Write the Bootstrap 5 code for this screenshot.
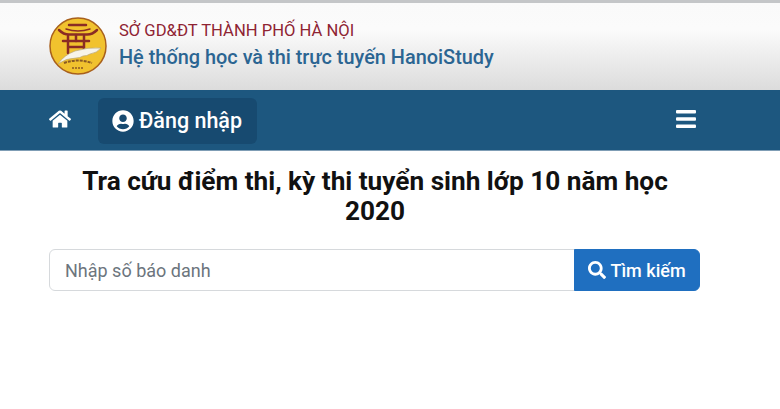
<!DOCTYPE html>
<html lang="vi">
<head>
    <meta charset="UTF-8">
    <meta name="viewport" content="width=device-width, initial-scale=1">
    <title>HanoiStudy</title>
    <link href="https://cdn.jsdelivr.net/npm/bootstrap@5.3.0/dist/css/bootstrap.min.css" rel="stylesheet">
    <style>
        body { font-family: Roboto, "Liberation Sans", sans-serif; background: #fff; }
        .top-line { height: 3px; background: #c4c6c8; }
        .site-head { height: 87px; padding-left: 49px; background: linear-gradient(#fafafa, #fbfbfb 30%, #dcdcdc); }
        .site-logo { width: 58px; height: 58px; margin-top: -1px; }
        .site-org { font-size: 16.6px; line-height: 20px; color: #8f2433; }
        .site-name { font-size: 19.9px; line-height: 30px; font-weight: 500; color: #2b6592; padding-top: 2px; }
        .main-bar { height: 61px; background: #1d577f; padding: 0 84px 0 49px; border-bottom: 1px solid #7f9db5; }
        .home-link { width: 22px; height: 20px; margin-right: 27px; margin-top: -3px; }
        .login-link { height: 46px; width: 159px; margin-top: 2px; padding-left: 14px; border-radius: 6px; background: #174a70; color: #fff; font-size: 21.5px; font-weight: 500; text-decoration: none; gap: 5px; }
        .burger { width: 20px; height: 18px; margin-top: -2px; }
        .page-title { width: 640px; margin: 15px 0 0 55px; font-size: 26.2px; line-height: 30px; font-weight: 700; color: #111; }
        .search-box { width: 651px; margin: 23px 0 0 49px; }
        .search-box .form-control { height: 42px; padding-left: 15px; font-size: 18px; border-color: #d6d9dc; }
        .search-box .form-control::placeholder { color: #6c757d; }
        .search-btn { width: 126px; height: 42px; background: #1f6fc0; border-color: #1f6fc0; font-size: 18px; font-weight: 500; padding: 0; }
    </style>
</head>
<body>
    <div class="top-line"></div>
    <header class="site-head d-flex align-items-center">
        <svg class="site-logo flex-shrink-0" viewBox="0 0 58 58">
            <circle cx="29" cy="29" r="28" fill="#f1c22e" stroke="#a8601c" stroke-width="1.5"/>
            <g fill="none" stroke="#8a2c24" stroke-linecap="round">
                <path d="M20 8h17" stroke-width="2.500"/>
                <path d="M17 12q6 2 12 2t12-2" stroke-width="1.500"/>
                <path d="M10 13q5 5 11 4.500h16q6 .5 11-4.500" stroke-width="2.500"/>
                <path d="M14 24h26" stroke-width="2.500"/>
                <path d="M19 19v17M35 19v14M19 30h16M27 18v6" stroke-width="2.500"/>
            </g>
            <path d="M9 47q6-9 17-13q13-4 26-3q-4 5-11 6q-3 2-7 2q-3 2-7 2q-10 0-18 6z" fill="#f7f4ea" stroke="#b9a679" stroke-width=".7"/>
            <path d="M15 46q14-5 28 0" fill="none" stroke="#8a5a24" stroke-width="2" stroke-dasharray="3 1"/>
            <path d="M23 51h12" stroke="#8a5a24" stroke-width="1.500" stroke-dasharray="2 1"/>
        </svg>
        <div class="ms-2 ps-1">
            <div class="site-org">SỞ GD&amp;ĐT THÀNH PHỐ HÀ NỘI</div>
            <div class="site-name">Hệ thống học và thi trực tuyến HanoiStudy</div>
        </div>
    </header>
    <nav class="main-bar d-flex align-items-center justify-content-between">
        <div class="d-flex align-items-center">
            <svg class="home-link" viewBox="0 0 576 512" fill="#fff"><path d="M280.4 148.3 96 300.1V464a16 16 0 0 0 16 16l112-.3a16 16 0 0 0 15.9-16V368a16 16 0 0 1 16-16h64a16 16 0 0 1 16 16v95.6a16 16 0 0 0 16 16.1l112 .3a16 16 0 0 0 16-16V300L295.7 148.3a12.2 12.2 0 0 0-15.3 0zM571.6 251.5 488 182.6V44.1a12 12 0 0 0-12-12h-56a12 12 0 0 0-12 12v72.6L318.5 43a48 48 0 0 0-61 0L4.3 251.5a12 12 0 0 0-1.6 16.9l25.5 31A12 12 0 0 0 45.2 301l235.2-193.7a12.2 12.2 0 0 1 15.3 0L530.9 301a12 12 0 0 0 16.9-1.6l25.5-31a12 12 0 0 0-1.7-16.9z"/></svg>
            <a href="#" class="login-link d-flex align-items-center">
                <svg width="22" height="22" viewBox="0 0 496 512" fill="#fff"><path d="M248 8C111 8 0 119 0 256s111 248 248 248 248-111 248-248S385 8 248 8zm0 96c48.600 0 88 39.400 88 88s-39.400 88-88 88-88-39.400-88-88 39.400-88 88-88zm0 344c-58.700 0-111.300-26.600-146.500-68.200 18.800-35.400 55.600-59.800 98.500-59.800 2.400 0 4.800.4 7.100 1.100 13 4.200 26.600 6.900 40.900 6.900 14.300 0 28-2.700 40.900-6.900 2.300-.7 4.700-1.100 7.100-1.100 42.900 0 79.700 24.400 98.500 59.800C359.300 421.400 306.700 448 248 448z"/></svg>
                Đăng nhập
            </a>
        </div>
        <svg class="burger" viewBox="0 0 20 18" fill="#fff"><rect width="20" height="3.400" y="0" rx="1"/><rect width="20" height="3.400" y="7.300" rx="1"/><rect width="20" height="3.400" y="14.600" rx="1"/></svg>
    </nav>
    <main>
        <h1 class="page-title text-center">Tra cứu điểm thi, kỳ thi tuyển sinh lớp 10 năm học 2020</h1>
        <div class="search-box input-group">
            <input type="text" class="form-control" placeholder="Nhập số báo danh">
            <button class="btn btn-primary search-btn d-flex align-items-center justify-content-center gap-1" type="button">
                <svg width="18" height="18" viewBox="0 0 512 512" fill="#fff"><path d="M505 442.700 405.300 343c-4.500-4.500-10.600-7-17-7H372c27.600-35.300 44-79.700 44-128C416 93.100 322.900 0 208 0S0 93.100 0 208s93.100 208 208 208c48.300 0 92.700-16.400 128-44v16.300c0 6.400 2.500 12.500 7 17l99.700 99.700c9.400 9.400 24.600 9.400 33.900 0l28.300-28.300c9.400-9.400 9.400-24.600.1-34zM208 336c-70.700 0-128-57.200-128-128 0-70.700 57.200-128 128-128 70.700 0 128 57.200 128 128 0 70.700-57.200 128-128 128z"/></svg>
                Tìm kiếm
            </button>
        </div>
    </main>
    <script src="https://cdn.jsdelivr.net/npm/bootstrap@5.3.0/dist/js/bootstrap.bundle.min.js"></script>
</body>
</html>
